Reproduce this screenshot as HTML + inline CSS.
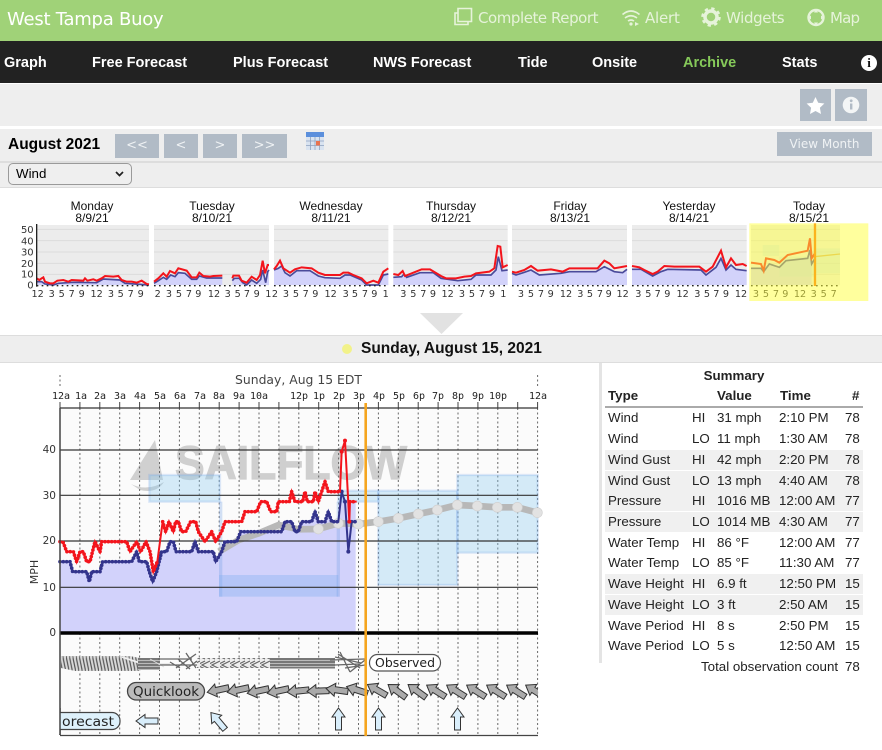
<!DOCTYPE html>
<html><head><meta charset="utf-8"><title>West Tampa Buoy</title>
<style>
html,body{margin:0;padding:0;width:882px;height:750px;overflow:hidden;background:#fff;font-family:"Liberation Sans",sans-serif;color:#000}
.a{position:absolute;white-space:nowrap}
.h{color:#e6f3da;font:15px "DejaVu Sans",sans-serif;top:9px;line-height:18px}
.n{color:#fff;font-weight:bold;font-size:14.5px;top:54.500px;line-height:17px}
.b{position:absolute;background:#b1bbc6;color:#eff2f4;text-align:center;font:13px/24px "DejaVu Sans",sans-serif}
.d{position:absolute;font-size:12px;line-height:12px;text-align:center;width:110px;color:#111;top:200px}
.r{position:absolute;left:605px;width:258px;height:20px;font-size:13.33px;line-height:20px;color:#222}
.r span{position:absolute;top:0}
.r .t{left:3px}.r .l{left:87px}.r .v{left:112px}.r .m{left:174px}.r .c{left:240px}
.g{background:#f0f0f0}
svg{position:absolute;left:0;top:0}
</style></head><body>
<div class="a" style="left:0;top:0;width:882px;height:41px;background:#a0d278"></div>
<div class="a" style="left:0;top:41px;width:882px;height:42px;background:#222"></div>
<div class="a" style="left:0;top:84px;width:882px;height:42px;background:#eee"></div>
<div class="a" style="left:0;top:129px;width:882px;height:32px;background:#eee"></div>
<div class="a" style="left:0;top:161px;width:882px;height:2px;background:#ddd"></div>
<div class="a" style="left:0;top:163px;width:882px;height:24px;background:#eee"></div>
<div class="a" style="left:0;top:187px;width:882px;height:1px;background:#ddd"></div>

<div class="a" style="left:7px;top:9px;font:18px/22px 'DejaVu Sans',sans-serif;color:#fff;letter-spacing:-.25px">West Tampa Buoy</div>
<div class="a h" style="left:478px;letter-spacing:-.45px">Complete Report</div>
<div class="a h" style="left:645px;letter-spacing:-.2px">Alert</div>
<div class="a h" style="left:726px;letter-spacing:-.35px">Widgets</div>
<div class="a h" style="left:830px;letter-spacing:-.8px">Map</div>
<svg width="882" height="41" viewBox="0 0 882 41">
<g fill="none" stroke="#e6f3da" stroke-width="1.6">
<path d="M458,13v-4.500h13.500v13h-13.500z"/><path d="M458,13h-3v11.500h13v-2.500"/>
<path d="M622.500,14.500q8.500,-7 17,0M625,18q6,-4.500 12,0M628,21q3,-2 6,0"/>
</g>
<circle cx="631" cy="24" r="1.600" fill="#e6f3da"/><path d="M635,22l4,2-4,2" fill="#e6f3da"/>
<circle cx="711" cy="17" r="6" fill="none" stroke="#e6f3da" stroke-width="3.500"/>
<circle cx="711" cy="17" r="8.500" fill="none" stroke="#e6f3da" stroke-width="2.500" stroke-dasharray="3.300 3.370"/>
<circle cx="816" cy="17.500" r="7.500" fill="none" stroke="#e6f3da" stroke-width="2.400"/>
<path d="M816,9.500l-2,3h4zM816,25.500l-2,-3h4zM808,17.500l3,-2v4zM824,17.500l-3,-2v4z" fill="#e6f3da"/>
</svg>

<div class="a n" style="left:4px">Graph</div>
<div class="a n" style="left:92px">Free Forecast</div>
<div class="a n" style="left:233px">Plus Forecast</div>
<div class="a n" style="left:373px">NWS Forecast</div>
<div class="a n" style="left:518px">Tide</div>
<div class="a n" style="left:592px">Onsite</div>
<div class="a n" style="left:683px;color:#86c95a">Archive</div>
<div class="a n" style="left:782px">Stats</div>
<div class="a" style="left:861px;top:54.500px;width:16px;height:16px;border-radius:8px;background:#fff;color:#111;font:bold 13px/16px 'Liberation Serif',serif;text-align:center">i</div>

<div class="b" style="left:800px;top:89px;width:31px;height:32px"></div>
<div class="b" style="left:835px;top:89px;width:32px;height:32px"></div>
<svg width="882" height="130" viewBox="0 0 882 130">
<path d="M815.500,97l2.700,5.700 6.200,.800-4.500,4.300 1.100,6.200-5.500,-3-5.500,3 1.100,-6.200-4.500,-4.300 6.200,-.800z" fill="#fff"/>
<circle cx="851" cy="105" r="8.300" fill="#f3f5f6"/>
<rect x="850" y="103.500" width="2.400" height="6" fill="#b1bbc6"/><circle cx="851.200" cy="100.800" r="1.400" fill="#b1bbc6"/>
</svg>

<div class="a" style="left:8px;top:135px;font-weight:bold;font-size:15.500px;line-height:19px">August 2021</div>
<div class="b" style="left:115px;top:134px;width:44px;height:24px">&lt;&lt;</div>
<div class="b" style="left:164px;top:134px;width:34px;height:24px">&lt;</div>
<div class="b" style="left:203px;top:134px;width:34px;height:24px">&gt;</div>
<div class="b" style="left:242px;top:134px;width:45px;height:24px">&gt;&gt;</div>
<svg width="882" height="160" viewBox="0 0 882 160" style="left:0;top:0">
<rect x="306" y="132" width="18" height="18" fill="#d9e3f0"/>
<rect x="306" y="132" width="18" height="5" fill="#5b8fdc"/>
<path d="M306,141h18M306,145.500h18M310.500,137v13M315,137v13M319.500,137v13" stroke="#8fa3bf" stroke-width=".8"/>
<rect x="316" y="141" width="4" height="4.500" fill="#e8734f"/>
</svg>
<div class="b" style="left:777px;top:132px;width:95px;height:24px;font-size:12px">View Month</div>

<div class="a" style="left:8px;top:163px;width:122px;height:20px;border:1px solid #9a9a9a;border-radius:5px;background:#efefef;font-size:13.33px;line-height:20px;text-indent:7px">Wind</div>
<svg width="882" height="190" viewBox="0 0 882 190"><path d="M116,172l3.500,3.500 3.500,-3.500" fill="none" stroke="#222" stroke-width="1.700"/></svg>

<div class="d" style="left:37px">Monday<br>8/9/21</div>
<div class="d" style="left:157px">Tuesday<br>8/10/21</div>
<div class="d" style="left:276px">Wednesday<br>8/11/21</div>
<div class="d" style="left:396px">Thursday<br>8/12/21</div>
<div class="d" style="left:515px">Friday<br>8/13/21</div>
<div class="d" style="left:634px">Yesterday<br>8/14/21</div>
<div class="d" style="left:754px">Today<br>8/15/21</div>

<svg width="882" height="340" viewBox="0 0 882 340">
<g transform="translate(0,190) scale(.33333)">
<g fill="#ececec">
<rect x="110" y="105" width="337" height="181"/><rect x="462" y="105" width="345" height="181"/><rect x="822" y="105" width="343" height="181"/><rect x="1180" y="105" width="343" height="181"/><rect x="1536" y="105" width="345" height="181"/><rect x="1896" y="105" width="344" height="181"/><rect x="2253" y="105" width="267" height="181"/>
</g>
<g stroke="#dcdcdc" stroke-width="3" fill="none">
<path d="M110,118h337M110,152h337M110,186h337M110,220h337M110,253h337M462,118h345M462,152h345M462,186h345M462,220h345M462,253h345M822,118h343M822,152h343M822,186h343M822,220h343M822,253h343M1180,118h343M1180,152h343M1180,186h343M1180,220h343M1180,253h343M1536,118h345M1536,152h345M1536,186h345M1536,220h345M1536,253h345M1896,118h344M1896,152h344M1896,186h344M1896,220h344M1896,253h344M2253,118h267M2253,152h267M2253,186h267M2253,220h267M2253,253h267"/>
</g>
<g fill="#d2d2fa">
<polygon points="110,285 110,275 125,275 135,282 160,285 175,280 220,277 290,278 310,267 360,270 375,280 447,285"/>
<polygon points="462,285 462,280 475,272 490,262 500,268 512,255 525,260 535,248 555,250 575,268 590,268 598,258 620,264 667,264 667,285"/>
<polygon points="697,285 697,272 703,265 718,265 728,278 740,285 755,270 770,280 782,268 788,240 797,278 803,245 807,240 807,285"/>
<polygon points="822,285 822,240 835,235 845,228 855,248 870,258 890,242 930,242 955,258 975,263 1020,265 1035,255 1050,255 1085,270 1100,285 1135,285 1150,255 1165,252 1165,285"/>
<polygon points="1180,285 1180,262 1205,260 1212,252 1220,262 1260,248 1300,248 1323,265 1373,272 1413,268 1428,255 1473,255 1488,240 1495,200 1506,242 1523,240 1523,285"/>
<polygon points="1536,285 1536,250 1548,255 1573,247 1593,240 1618,255 1683,250 1708,245 1788,245 1813,230 1843,245 1868,248 1881,238 1881,285"/>
<polygon points="1896,285 1896,238 1923,238 1958,258 1983,245 2003,238 2103,240 2118,255 2148,232 2163,205 2178,240 2193,225 2208,238 2240,242 2240,285"/>
<polygon points="2253,285 2253,235 2283,235 2291,245 2308,222 2338,232 2358,212 2423,205 2430,180 2435,222 2435,285"/>
</g>
<g fill="#b8dcef" opacity=".35"><rect x="2288" y="165" width="50" height="33"/><rect x="2338" y="200" width="105" height="60"/><rect x="2443" y="175" width="77" height="75"/></g>
<g fill="none" stroke="#4a4a9a" stroke-width="5">
<polyline points="110,275 125,275 135,282 160,285 175,280 220,277 290,278 310,267 360,270 375,280 447,285"/>
<polyline points="462,280 475,272 490,262 500,268 512,255 525,260 535,248 555,250 575,268 590,268 598,258 620,264 667,264"/>
<polyline points="697,272 703,265 718,265 728,278 740,285 755,270 770,280 782,268 788,240 797,278 803,245 807,240"/>
<polyline points="822,240 835,235 845,228 855,248 870,258 890,242 930,242 955,258 975,263 1020,265 1035,255 1050,255 1085,270 1100,285 1135,285 1150,255 1165,252"/>
<polyline points="1180,262 1205,260 1212,252 1220,262 1260,248 1300,248 1323,265 1373,272 1413,268 1428,255 1473,255 1488,240 1495,200 1506,242 1523,240"/>
<polyline points="1536,250 1548,255 1573,247 1593,240 1618,255 1683,250 1708,245 1788,245 1813,230 1843,245 1868,248 1881,238"/>
<polyline points="1896,238 1923,238 1958,258 1983,245 2003,238 2103,240 2118,255 2148,232 2163,205 2178,240 2193,225 2208,238 2240,242"/>
<polyline points="2253,235 2283,235 2291,245 2308,222 2338,232 2358,212 2423,205 2430,180 2435,222 2445,205"/>
</g>
<g fill="none" stroke="#f3141c" stroke-width="6">
<polyline points="110,265 118,270 125,265 130,262 135,275 150,280 160,280 172,272 190,270 205,275 215,270 250,272 255,265 262,272 280,268 290,272 305,265 315,258 340,260 355,258 365,270 380,275 395,275 410,278 425,272 440,282 447,283"/>
<polyline points="462,275 475,265 490,250 500,260 510,243 525,250 535,235 560,242 575,262 590,262 598,248 610,258 630,260 640,258 667,257"/>
<polyline points="697,265 700,257 717,257 725,272 740,278 755,260 770,270 780,255 788,212 795,250 803,225 807,225"/>
<polyline points="822,238 830,228 840,212 850,235 870,248 885,238 905,232 935,235 955,248 975,255 1020,255 1030,248 1045,248 1060,255 1085,265 1100,280 1120,272 1135,278 1150,245 1165,235"/>
<polyline points="1180,252 1195,255 1208,243 1215,258 1240,248 1265,238 1290,238 1310,250 1323,258 1338,265 1368,265 1393,260 1413,258 1428,250 1468,245 1483,235 1493,168 1501,170 1508,232 1523,225"/>
<polyline points="1536,245 1548,248 1573,240 1593,228 1613,242 1653,238 1688,245 1708,235 1793,235 1813,212 1828,220 1843,235 1881,228"/>
<polyline points="1896,228 1918,232 1933,240 1958,252 1973,245 1993,228 2023,230 2098,230 2118,245 2138,230 2163,182 2178,232 2193,205 2208,225 2228,222 2240,228"/>
<polyline points="2253,218 2283,222 2291,242 2298,205 2323,210 2338,218 2363,195 2423,182 2430,145 2435,205 2445,190"/>
</g>
<path d="M2443,200L2520,192" stroke="#d8b060" stroke-width="4" fill="none"/>
<path d="M110,102V290" stroke="#222" stroke-width="4"/>
<path d="M110,287H447M462,287H807M822,287H1165M1180,287H1523M1536,287H1881M1896,287H2240M2253,287H2520" stroke="#222" stroke-width="4" stroke-dasharray="5 10" fill="none"/>
<g font-family="'DejaVu Sans',sans-serif" font-size="30" fill="#333" text-anchor="end">
<text x="101" y="129">50</text><text x="101" y="163">40</text><text x="101" y="197">30</text><text x="101" y="231">20</text><text x="101" y="263">10</text><text x="101" y="296">0</text>
</g>
<g font-family="'DejaVu Sans',sans-serif" font-size="29" fill="#333" text-anchor="middle">
<text x="113" y="321">12</text><text x="155" y="321">3</text><text x="185" y="321">5</text><text x="215" y="321">7</text><text x="245" y="321">9</text><text x="290" y="321">12</text><text x="333" y="321">3</text><text x="362" y="321">5</text><text x="392" y="321">7</text><text x="422" y="321">9</text>
<text x="473" y="321">2</text><text x="507" y="321">3</text><text x="537" y="321">5</text><text x="567" y="321">7</text><text x="595" y="321">9</text><text x="642" y="321">12</text><text x="683" y="321">3</text><text x="713" y="321">5</text><text x="741" y="321">7</text><text x="770" y="321">9</text><text x="805" y="321">1</text>
<text x="825" y="321">2</text><text x="858" y="321">3</text><text x="888" y="321">5</text><text x="917" y="321">7</text><text x="946" y="321">9</text><text x="992" y="321">12</text><text x="1037" y="321">3</text><text x="1065" y="321">5</text><text x="1095" y="321">7</text><text x="1123" y="321">9</text><text x="1157" y="321">1</text>
<text x="1210" y="321">3</text><text x="1240" y="321">5</text><text x="1270" y="321">7</text><text x="1299" y="321">9</text><text x="1343" y="321">12</text><text x="1386" y="321">3</text><text x="1416" y="321">5</text><text x="1446" y="321">7</text><text x="1476" y="321">9</text><text x="1510" y="321">1</text>
<text x="1563" y="321">3</text><text x="1593" y="321">5</text><text x="1623" y="321">7</text><text x="1652" y="321">9</text><text x="1698" y="321">12</text><text x="1741" y="321">3</text><text x="1770" y="321">5</text><text x="1800" y="321">7</text><text x="1826" y="321">9</text><text x="1868" y="321">12</text>
<text x="1915" y="321">3</text><text x="1945" y="321">5</text><text x="1973" y="321">7</text><text x="2002" y="321">9</text><text x="2048" y="321">12</text><text x="2092" y="321">3</text><text x="2121" y="321">5</text><text x="2149" y="321">7</text><text x="2178" y="321">9</text><text x="2223" y="321">12</text>
<text x="2268" y="321">3</text><text x="2298" y="321">5</text><text x="2328" y="321">7</text><text x="2356" y="321">9</text><text x="2400" y="321">12</text><text x="2441" y="321">3</text><text x="2471" y="321">5</text><text x="2501" y="321">7</text>
</g>
<rect x="2248" y="100" width="357" height="233" fill="#ffff3c" fill-opacity=".5"/>
<path d="M2445,100V288" stroke="#fbb31e" stroke-width="7"/>
</g>
<polygon points="420,313 463,313 441.500,334" fill="#e2e2e2"/>
</svg>

<div class="a" style="left:0;top:335px;width:882px;height:26px;background:#eee;border-top:1px solid #ddd;border-bottom:1px solid #ddd"></div>
<div class="a" style="left:342px;top:344px;width:10px;height:10px;border-radius:5px;background:#f2f28a"></div>
<div class="a" style="left:361px;top:340px;font-weight:bold;font-size:15.500px;line-height:18px;color:#111">Sunday, August 15, 2021</div>

<svg width="600" height="750" viewBox="0 0 600 750">
<defs>
<path id="ar" d="M-11,0L-2,-6.500V-3H11V3H-2V6.500Z"/>
<pattern id="hat" width="3.300" height="16" patternUnits="userSpaceOnUse"><rect width="3.300" height="16" fill="#d8d8d8"/><path d="M0,0L3.300,16" stroke="#555" stroke-width="1.200"/></pattern>
<pattern id="stripe" width="8" height="3" patternUnits="userSpaceOnUse"><rect width="8" height="3" fill="#777"/><rect width="8" height="1" fill="#bbb"/></pattern>
<pattern id="chev" width="10" height="10" patternUnits="userSpaceOnUse"><rect width="10" height="10" fill="#eee"/><path d="M10,1L2,5L10,9M5,1L-3,5L5,9" stroke="#666" stroke-width="1.200" fill="none"/></pattern>
<clipPath id="cp"><rect x="60" y="400" width="478" height="340"/></clipPath>
</defs>
<rect x="60" y="408" width="478" height="327" fill="#fbfbfb"/>
<path d="M155,440L163,480H130Z" fill="#d0d0d0"/>
<path d="M131,484q16,8 33,-2q-8,12 -24,8z" fill="#d0d0d0"/>
<text x="175" y="479" font-family="'Liberation Sans',sans-serif" font-weight="bold" font-size="47" fill="#cfcfcf" stroke="#cfcfcf" stroke-width="1.200" textLength="232" lengthAdjust="spacingAndGlyphs">SAILFLOW</text>
<path d="M79.900,408V735M99.800,408V735M119.700,408V735M139.600,408V735M159.500,408V735M179.400,408V735M199.300,408V735M219.200,408V735M239.100,408V735M259,408V735M278.900,408V735M298.800,408V735M318.700,408V735M338.600,408V735M358.500,408V735M378.400,408V735M398.300,408V735M418.200,408V735M438.100,408V735M458,408V735M477.900,408V735M497.800,408V735M517.700,408V735M537.600,408V735M60,375V388M537.600,375V388" stroke="#666" stroke-width="1" stroke-dasharray="2 2.500" fill="none"/>
<path d="M60,402V408M79.900,402V408M99.800,402V408M119.700,402V408M139.600,402V408M159.500,402V408M179.400,402V408M199.300,402V408M219.200,402V408M239.100,402V408M259,402V408M278.900,402V408M298.800,402V408M318.700,402V408M338.600,402V408M358.500,402V408M378.400,402V408M398.300,402V408M418.200,402V408M438.100,402V408M458,402V408M477.900,402V408M497.800,402V408M517.700,402V408M537.600,402V408" stroke="#444" stroke-width="1"/>
<g transform="translate(20,370) scale(.33333)">
<polygon fill="#d2d2fb" points="120,788 120,575 150,575 158,605 200,605 208,635 215,605 240,605 248,575 335,575 350,545 358,575 380,575 388,605 398,635 410,605 425,545 440,545 450,515 460,515 468,545 515,545 525,515 535,545 580,545 587,575 605,545 615,515 650,515 662,485 785,485 795,455 815,455 825,485 835,485 845,455 875,455 885,425 895,455 915,455 925,425 935,455 955,455 965,365 975,395 1007,395 1007,788"/>
<g fill="#87c8f0" fill-opacity=".33" stroke="#6f9fe6" stroke-opacity=".22" stroke-width="7">
<rect x="388" y="315" width="212" height="80"/>
<rect x="1075" y="362" width="237" height="283"/>
<rect x="1312" y="315" width="241" height="233"/>
<rect x="955" y="362" width="120" height="33"/>
</g>
<rect x="597" y="395" width="10" height="285" fill="#6f9fe6" fill-opacity=".3"/>
<rect x="597" y="615" width="358" height="65" fill="#7fb0f2" fill-opacity=".35"/>
<rect x="950" y="395" width="10" height="285" fill="#6f9fe6" fill-opacity=".3"/>
<polyline points="597,545 656,510 716,490 776,465 836,478 895,477 955,460 1015,462 1075,455 1135,445 1195,432 1252,420 1312,405 1372,408 1432,412 1492,412 1552,428" fill="none" stroke="#b8b8b8" stroke-width="20"/>
<g fill="#e2e2e2" stroke="#d0d0d0" stroke-width="2">
<circle cx="895" cy="477" r="15"/><circle cx="955" cy="460" r="15"/><circle cx="1015" cy="462" r="15"/><circle cx="1075" cy="455" r="15"/><circle cx="1135" cy="445" r="15"/><circle cx="1195" cy="432" r="15"/><circle cx="1252" cy="420" r="15"/><circle cx="1312" cy="405" r="15"/><circle cx="1372" cy="408" r="15"/><circle cx="1432" cy="412" r="15"/><circle cx="1492" cy="412" r="15"/><circle cx="1552" cy="428" r="15"/>
</g>
<path d="M120,240H1553M120,376H1553M120,513H1553M120,652H1553" stroke="#333" stroke-width="3.500"/>
<path d="M120,575L150,575 158,605 200,605 208,635 215,605 240,605 248,575 335,575 350,545 358,575 380,575 388,605 398,635 410,605 425,545 440,545 450,515 460,515 468,545 515,545 525,515 535,545 580,545 587,575 605,545 615,515 650,515 662,485 785,485 795,455 815,455 825,485 835,485 845,455 875,455 885,425 895,455 915,455 925,425 935,455 955,455 965,365 975,395 985,545 995,455 1010,455" fill="none" stroke="#33348c" stroke-width="6"/>
<path d="M120,575L150,575 158,605 200,605 208,635 215,605 240,605 248,575 335,575 350,545 358,575 380,575 388,605 398,635 410,605 425,545 440,545 450,515 460,515 468,545 515,545 525,515 535,545 580,545 587,575 605,545 615,515 650,515 662,485 785,485 795,455 815,455 825,485 835,485 845,455 875,455 885,425 895,455 915,455 925,425 935,455 955,455" fill="none" stroke="#33348c" stroke-width="11" stroke-linecap="round" stroke-dasharray="0 10"/>
<path d="M995,455H1010" fill="none" stroke="#33348c" stroke-width="11" stroke-linecap="round" stroke-dasharray="0 10"/>
<g fill="#33348c"><circle cx="965" cy="365" r="6"/><circle cx="975" cy="395" r="6"/><circle cx="985" cy="545" r="6"/></g>
<path d="M120,515L130,518 140,545 160,545 170,575 180,545 190,545 200,575 210,575 225,515 240,545 245,515 320,515 330,545 350,515 362,545 378,515 390,545 400,605 412,575 428,455 437,485 447,455 460,485 467,455 475,455 485,485 497,485 512,455 527,455 535,485 555,515 575,485 587,515 605,485 615,455 665,455 675,425 710,425 722,395 740,395 752,425 770,425 775,395 808,395 815,365 825,395 848,395 855,365 862,395 880,395 885,365 895,395 905,365 915,335 925,365 960,365 965,245 975,212 988,455 990,395 1010,395" fill="none" stroke="#f3141c" stroke-width="6"/>
<path d="M120,515L130,518 140,545 160,545 170,575 180,545 190,545 200,575 210,575 225,515 240,545 245,515 320,515 330,545 350,515 362,545 378,515 390,545 400,605 412,575" fill="none" stroke="#f3141c" stroke-width="11" stroke-linecap="round" stroke-dasharray="0 10"/>
<path d="M428,455L437,485 447,455 460,485 467,455 475,455 485,485 497,485 512,455 527,455 535,485 555,515 575,485 587,515 605,485 615,455 665,455 675,425 710,425 722,395 740,395 752,425 770,425 775,395 808,395 815,365 825,395 848,395 855,365 862,395 880,395 885,365 895,395 905,365 915,335 925,365 960,365" fill="none" stroke="#f3141c" stroke-width="11" stroke-linecap="round" stroke-dasharray="0 10"/>
<path d="M990,395H1010" fill="none" stroke="#f3141c" stroke-width="11" stroke-linecap="round" stroke-dasharray="0 10"/>
<g fill="#f3141c"><circle cx="965" cy="245" r="6"/><circle cx="975" cy="212" r="6"/><circle cx="988" cy="455" r="6"/></g>
</g>
<path d="M60,408H538" stroke="#333" stroke-width="1.200"/>
<path d="M60,633H538" stroke="#000" stroke-width="3.400"/>
<path d="M60,408V735" stroke="#444" stroke-width="1.500"/>
<path d="M60,735.500H538" stroke="#444" stroke-width="1.200"/>

<polygon points="61,656 130,656 140,658 140,671 75,671 61,668" fill="url(#hat)"/>
<path d="M122,657l18,6" stroke="#eee" stroke-width="1.800"/>
<rect x="138" y="658" width="22" height="12" fill="url(#stripe)"/>
<path d="M150,659l14,8M158,664h12" stroke="#ddd" stroke-width="1"/>
<path d="M158,659h34M186,653l10,15M160,665h38M196,654l-20,14M178,659l12,10M200,659l-14,10M195,662l16,-3M170,662l10,6" stroke="#666" stroke-width="1.300" fill="none"/>
<rect x="197" y="658" width="73" height="10" fill="url(#chev)"/>
<rect x="270" y="658" width="65" height="10.500" fill="url(#stripe)"/>
<path d="M330,660l35,-1M335,665l24,-1M340,652l10,20M338,654l22,14M350,672l15,-12M345,668l20,-3M335,657l26,6" stroke="#666" stroke-width="1.300" fill="none"/>
<rect x="127.500" y="682.500" width="77" height="17.500" rx="8.700" fill="#bbb" stroke="#444" stroke-width="1.300"/>
<text x="166" y="696" text-anchor="middle" font-family="'DejaVu Sans',sans-serif" font-size="13.500" fill="#222" textLength="66" lengthAdjust="spacingAndGlyphs">Quicklook</text>
<rect x="369.500" y="654.500" width="71" height="16.500" rx="8" fill="#fff" stroke="#555" stroke-width="1.200"/>
<text x="405" y="667" text-anchor="middle" font-family="'DejaVu Sans',sans-serif" font-size="12.500" fill="#222" textLength="60" lengthAdjust="spacingAndGlyphs">Observed</text>
<rect x="50" y="712.500" width="70" height="17" rx="8" fill="#def1fb" stroke="#444" stroke-width="1.200"/>
<rect x="40" y="708" width="20" height="26" fill="#fff"/>
<path d="M60,708V735" stroke="#444" stroke-width="1.500"/>
<text x="62" y="726" font-family="'DejaVu Sans',sans-serif" font-size="13" fill="#222" textLength="52" lengthAdjust="spacingAndGlyphs">orecast</text>

<g fill="#aaa" stroke="#333" stroke-width="1" clip-path="url(#cp)">
<use href="#ar" transform="translate(218,690) rotate(-12)"/>
<use href="#ar" transform="translate(238,690) rotate(-12)"/>
<use href="#ar" transform="translate(258,691) rotate(-12)"/>
<use href="#ar" transform="translate(278,691) rotate(-12)"/>
<use href="#ar" transform="translate(298,691) rotate(-6)"/>
<use href="#ar" transform="translate(318,691) rotate(-2)"/>
<use href="#ar" transform="translate(337,690) rotate(8)"/>
<use href="#ar" transform="translate(357,690) rotate(18)"/>
<use href="#ar" transform="translate(377,690) rotate(30)"/>
<use href="#ar" transform="translate(397,691) rotate(36)"/>
<use href="#ar" transform="translate(417,691) rotate(36)"/>
<use href="#ar" transform="translate(436,691) rotate(32)"/>
<use href="#ar" transform="translate(456,691) rotate(32)"/>
<use href="#ar" transform="translate(476,691) rotate(32)"/>
<use href="#ar" transform="translate(496,691) rotate(32)"/>
<use href="#ar" transform="translate(516,691) rotate(32)"/>
<use href="#ar" transform="translate(535,691) rotate(32)"/>
</g>
<g fill="#d9eefb" stroke="#333" stroke-width="1">
<use href="#ar" transform="translate(147,721)"/>
<use href="#ar" transform="translate(218,721) rotate(50)"/>
<use href="#ar" transform="translate(338.500,719) rotate(90)"/>
<use href="#ar" transform="translate(378.500,719) rotate(90)"/>
<use href="#ar" transform="translate(457.500,719) rotate(90)"/>
</g>
<path d="M365.700,403V736" stroke="#f5a51f" stroke-width="2.600"/>

<text x="235" y="384" font-family="'DejaVu Sans',sans-serif" font-size="12" fill="#444" textLength="127" lengthAdjust="spacingAndGlyphs">Sunday, Aug 15 EDT</text>
<g font-family="'DejaVu Sans Mono',monospace" font-size="10" fill="#222" text-anchor="middle">
<text x="61" y="399">12a</text><text x="81" y="399">1a</text><text x="100" y="399">2a</text><text x="120" y="399">3a</text><text x="140" y="399">4a</text><text x="160" y="399">5a</text><text x="180" y="399">6a</text><text x="200" y="399">7a</text><text x="219" y="399">8a</text><text x="239" y="399">9a</text><text x="259" y="399">10a</text><text x="299" y="399">12p</text><text x="319" y="399">1p</text><text x="339" y="399">2p</text><text x="359" y="399">3p</text><text x="379" y="399">4p</text><text x="399" y="399">5p</text><text x="419" y="399">6p</text><text x="438" y="399">7p</text><text x="458" y="399">8p</text><text x="478" y="399">9p</text><text x="498" y="399">10p</text><text x="538" y="399">12a</text>
</g>
<g font-family="'DejaVu Sans',sans-serif" font-size="10.500" fill="#333" text-anchor="end">
<text x="56" y="453">40</text><text x="56" y="499">30</text><text x="56" y="544">20</text><text x="56" y="591">10</text><text x="56" y="636">0</text>
</g>
<text transform="translate(38,572) rotate(-90)" text-anchor="middle" font-family="'DejaVu Sans',sans-serif" font-size="11" fill="#333">MPH</text>
</svg>

<div class="a" style="left:599px;top:363px;width:3px;height:300px;background:#e4e4e4"></div>
<div class="a" style="left:605px;top:368px;width:258px;text-align:center;font-weight:bold;font-size:13.33px;line-height:16px;color:#222">Summary</div>
<div class="a" style="left:605px;top:388px;width:258px;height:16px;font-weight:bold;font-size:13.33px;line-height:16px;color:#222">
<span class="a" style="left:3px">Type</span><span class="a" style="left:112px">Value</span><span class="a" style="left:175px">Time</span><span class="a" style="left:247px">#</span></div>
<div class="a" style="left:605px;top:406px;width:258px;height:2px;background:#aaa"></div>
<div class="r" style="top:408px"><span class="t">Wind</span><span class="l">HI</span><span class="v">31 mph</span><span class="m">2:10 PM</span><span class="c">78</span></div>
<div class="r" style="top:429px"><span class="t">Wind</span><span class="l">LO</span><span class="v">11 mph</span><span class="m">1:30 AM</span><span class="c">78</span></div>
<div class="r g" style="top:450px"><span class="t">Wind Gust</span><span class="l">HI</span><span class="v">42 mph</span><span class="m">2:20 PM</span><span class="c">78</span></div>
<div class="r g" style="top:470.500px"><span class="t">Wind Gust</span><span class="l">LO</span><span class="v">13 mph</span><span class="m">4:40 AM</span><span class="c">78</span></div>
<div class="r g" style="top:491px"><span class="t">Pressure</span><span class="l">HI</span><span class="v">1016 MB</span><span class="m">12:00 AM</span><span class="c">77</span></div>
<div class="r g" style="top:512px"><span class="t">Pressure</span><span class="l">LO</span><span class="v">1014 MB</span><span class="m">4:30 AM</span><span class="c">77</span></div>
<div class="r" style="top:532.500px"><span class="t">Water Temp</span><span class="l">HI</span><span class="v">86 °F</span><span class="m">12:00 AM</span><span class="c">77</span></div>
<div class="r" style="top:553px"><span class="t">Water Temp</span><span class="l">LO</span><span class="v">85 °F</span><span class="m">11:30 AM</span><span class="c">77</span></div>
<div class="r g" style="top:574px"><span class="t">Wave Height</span><span class="l">HI</span><span class="v">6.9 ft</span><span class="m">12:50 PM</span><span class="c">15</span></div>
<div class="r g" style="top:595px"><span class="t">Wave Height</span><span class="l">LO</span><span class="v">3 ft</span><span class="m">2:50 AM</span><span class="c">15</span></div>
<div class="r" style="top:615.500px"><span class="t">Wave Period</span><span class="l">HI</span><span class="v">8 s</span><span class="m">2:50 PM</span><span class="c">15</span></div>
<div class="r" style="top:636px"><span class="t">Wave Period</span><span class="l">LO</span><span class="v">5 s</span><span class="m">12:50 AM</span><span class="c">15</span></div>
<div class="r" style="top:657px"><span style="left:96px">Total observation count</span><span class="c">78</span></div>
</body></html>
